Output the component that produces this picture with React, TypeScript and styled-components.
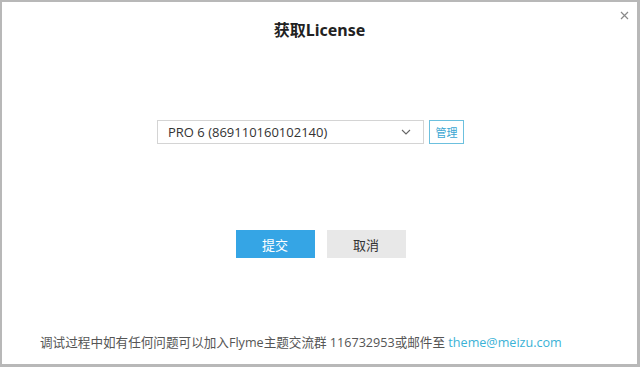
import React from 'react';
import styled, { createGlobalStyle } from 'styled-components';

const GlobalStyle = createGlobalStyle`
  html, body {
    margin: 0;
    padding: 0;
    background: #ffffff;
  }
  * {
    box-sizing: border-box;
  }
`;

const Window = styled.div`
  width: 640px;
  height: 367px;
  background: #ffffff;
  border-style: solid;
  border-color: #b8b8b8;
  border-width: 2px 3px 3px 2px;
  display: flex;
  flex-direction: column;
  position: relative;
  font-family: "Open Sans", "Noto Sans CJK SC", sans-serif;
  color: #333333;
`;

const Header = styled.header`
  padding-top: 18px;
  display: flex;
  justify-content: center;
`;

const Title = styled.h1`
  margin: 0;
  font-size: 16px;
  line-height: 20px;
  font-weight: 700;
  color: #222222;
  font-family: "Noto Sans", "Noto Sans CJK SC", sans-serif;
`;

const CloseButton = styled.button`
  position: absolute;
  top: 6px;
  right: 6px;
  width: 14px;
  height: 14px;
  padding: 0;
  border: none;
  background: transparent;
  display: flex;
  align-items: center;
  justify-content: center;
  cursor: pointer;
`;

const DeviceRow = styled.div`
  margin-top: 80px;
  display: flex;
  gap: 5px;
  padding-left: 155px;
`;

const Select = styled.div`
  width: 267px;
  height: 24px;
  border: 1px solid #d4d4d4;
  display: flex;
  align-items: center;
  justify-content: space-between;
  padding: 0 12px 0 10px;
  font-size: 13px;
  color: #333333;
`;

const ManageButton = styled.button`
  width: 35px;
  height: 24px;
  padding: 0;
  border: 1px solid #6cc0de;
  background: #ffffff;
  color: #3aa6d2;
  font-size: 11px;
  font-family: "Noto Sans CJK SC", sans-serif;
  cursor: pointer;
`;

const ActionRow = styled.div`
  margin-top: 86px;
  display: flex;
  justify-content: center;
  gap: 12px;
  padding-left: 2px;
`;

const ActionButton = styled.button<{ $primary?: boolean }>`
  width: 79px;
  height: 28px;
  border: none;
  padding: 0;
  background: ${({ $primary }) => ($primary ? '#35a5e5' : '#e8e8e8')};
  color: ${({ $primary }) => ($primary ? '#ffffff' : '#333333')};
  font-size: 13px;
  font-family: "Noto Sans CJK SC", sans-serif;
  cursor: pointer;
`;

const Footer = styled.footer`
  margin-top: auto;
  padding: 0 0 11px 38px;
  font-size: 12.6px;
  line-height: 20px;
  color: #555555;
  white-space: nowrap;
  font-family: "Open Sans", "Noto Sans CJK SC", sans-serif;
`;

const Mail = styled.a`
  color: #3ab2d6;
  text-decoration: none;
`;

const App: React.FC = () => {
  return (
    <>
      <GlobalStyle />
      <Window>
        <Header>
          <Title>获取License</Title>
        </Header>
        <CloseButton aria-label="close">
          <svg width="9" height="9" viewBox="0 0 9 9">
            <path d="M1 1L8 8M8 1L1 8" stroke="#8a8a8a" strokeWidth="1.2" />
          </svg>
        </CloseButton>

        <DeviceRow>
          <Select>
            <span>PRO 6 (869110160102140)</span>
            <svg width="10" height="6" viewBox="0 0 10 6">
              <path d="M1 1L5 5L9 1" fill="none" stroke="#666666" strokeWidth="1.1" />
            </svg>
          </Select>
          <ManageButton>管理</ManageButton>
        </DeviceRow>

        <ActionRow>
          <ActionButton $primary>提交</ActionButton>
          <ActionButton>取消</ActionButton>
        </ActionRow>

        <Footer>
          调试过程中如有任何问题可以加入Flyme主题交流群 116732953或邮件至{' '}
          <Mail href="#">theme@meizu.com</Mail>
        </Footer>
      </Window>
    </>
  );
};

export default App;
